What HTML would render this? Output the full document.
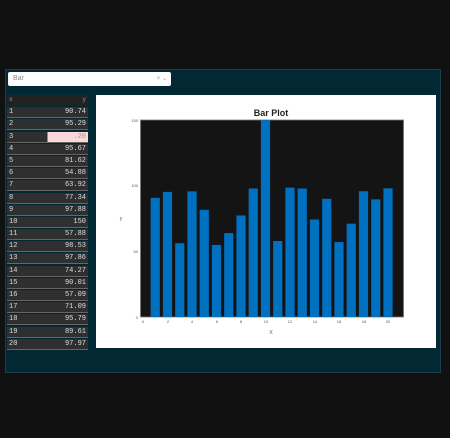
<!DOCTYPE html><html><head><style>
body{margin:0;width:450px;height:438px;background:#111;position:relative;overflow:hidden;font-family:"Liberation Mono",monospace}
.panel{position:absolute;left:5px;top:69px;width:436px;height:304px;background:#022833;border:1px solid #1c3e48;box-sizing:border-box}
.dd{position:absolute;left:8px;top:72px;width:163px;height:14px;background:#fff;border-radius:2px;font:7px "Liberation Sans",sans-serif;color:#888;line-height:14px;box-sizing:border-box;padding-left:5px}
.dd span{position:absolute;right:4px;top:0;font-size:6px;color:#999}
.tbl{position:absolute;left:7px;top:95px;width:81px}
.hd{height:11px;background:#222;font-size:6px;color:#999;position:relative;line-height:10px}
.r{height:10px;margin-top:1.2px;background:#2f2f2f;border-bottom:1px solid #666;font-size:7px;color:#ddd;position:relative;line-height:10px}
.r b,.hd b{font-weight:normal;position:absolute;left:2px}
.r i,.hd i{font-style:normal;position:absolute;right:2px}
.plot{position:absolute;left:96px;top:95px;width:340px;height:253px;background:#fff}
</style></head><body>
<div class="panel"></div>
<div class="dd">Bar<span>× ⌄</span></div>
<div class="tbl">
<div class="hd"><b>x</b><i>y</i></div>
<div class="r"><b>1</b><i>90.74</i></div>
<div class="r"><b>2</b><i>95.29</i></div>
<div class="r" style="background:linear-gradient(90deg,#2f2f2f 50%,#fcd8d8 50%)"><b>3</b><i style="color:#999">.20</i></div>
<div class="r"><b>4</b><i>95.67</i></div>
<div class="r"><b>5</b><i>81.62</i></div>
<div class="r"><b>6</b><i>54.88</i></div>
<div class="r"><b>7</b><i>63.92</i></div>
<div class="r"><b>8</b><i>77.34</i></div>
<div class="r"><b>9</b><i>97.88</i></div>
<div class="r"><b>10</b><i>150</i></div>
<div class="r"><b>11</b><i>57.88</i></div>
<div class="r"><b>12</b><i>98.53</i></div>
<div class="r"><b>13</b><i>97.86</i></div>
<div class="r"><b>14</b><i>74.27</i></div>
<div class="r"><b>15</b><i>90.01</i></div>
<div class="r"><b>16</b><i>57.09</i></div>
<div class="r"><b>17</b><i>71.09</i></div>
<div class="r"><b>18</b><i>95.79</i></div>
<div class="r"><b>19</b><i>89.61</i></div>
<div class="r"><b>20</b><i>97.97</i></div>
</div>
<div class="plot"></div>
<svg style="position:absolute;left:0;top:0" width="450" height="438" font-family="Liberation Sans,sans-serif">
<text x="271" y="116" font-size="9" font-weight="bold" text-anchor="middle" fill="#222">Bar Plot</text>
<rect x="140.5" y="120" width="263" height="197" fill="#141414" stroke="#777" stroke-width="0.8"/>
<g fill="#0070c0" id="bars"></g>
<g font-size="4" fill="#555" text-anchor="end">
<text x="138" y="122">150</text><text x="138" y="187">100</text><text x="138" y="253">50</text><text x="138" y="319">0</text></g>
<g font-size="4" fill="#555" text-anchor="middle">
<text x="143" y="323">0</text><text x="168" y="323">2</text><text x="192" y="323">4</text><text x="217" y="323">6</text><text x="241" y="323">8</text><text x="266" y="323">10</text><text x="290" y="323">12</text><text x="315" y="323">14</text><text x="339" y="323">16</text><text x="364" y="323">18</text><text x="388" y="323">20</text>
<text x="271" y="334" font-size="5">X</text><text x="121" y="220" font-size="5">y</text></g>
</svg>
<script>
var v=[90.74,95.29,56.2,95.67,81.62,54.88,63.92,77.34,97.88,150,57.88,98.53,97.86,74.27,90.01,57.09,71.09,95.79,89.61,97.97],g=document.getElementById('bars'),s='';
v.forEach(function(y,i){var x=143+(i+1)*12.25-4.6,h=y*1.313;s+='<rect x="'+x+'" y="'+(317-h)+'" width="9.2" height="'+h+'"/>';});
g.innerHTML=s;
</script>
</body></html>
